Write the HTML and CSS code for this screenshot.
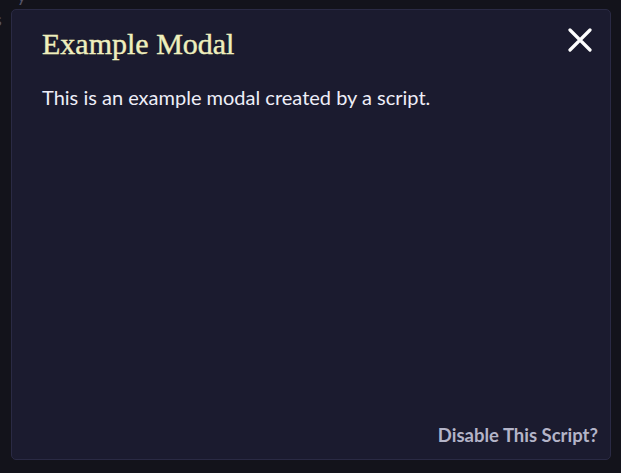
FILE: index.html
```html
<!DOCTYPE html>
<html lang="en">
<head>
<meta charset="utf-8">
<title>Example Modal</title>
<link rel="stylesheet" href="styles.css">
</head>
<body>
<div class="page">
  <p class="page-line page-line-top">y</p>
  <p class="page-line page-line-left">s</p>
</div>
<div class="modal">
  <div class="modal-header">
    <h1 class="modal-title">Example Modal</h1>
    <button class="modal-close" aria-label="Close">
      <svg width="24" height="24" viewBox="0 0 24 24"><path d="M2 2 L22 22 M22 2 L2 22" stroke="#ffffff" stroke-width="3.2" stroke-linecap="round"/></svg>
    </button>
  </div>
  <p class="modal-body">This is an example modal created by a script.</p>
  <div class="modal-footer">
    <a class="modal-disable" href="#">Disable This Script?</a>
  </div>
</div>
</body>
</html>
```
FILE: styles.css
```css
html, body {
  margin: 0;
  padding: 0;
  height: 100%;
}
body {
  background: #13131b;
  font-family: Lato, "Noto Sans", sans-serif;
  overflow: hidden;
  position: relative;
}
.page {
  color: #55556a;
  font-size: 18px;
}
.page-line {
  margin: 0;
  position: absolute;
}
.page-line-top { left: 17px; top: -16px; }
.page-line-left { left: -6px; top: 8px; }
.modal {
  position: absolute;
  left: 11px;
  top: 9px;
  width: 600px;
  height: 451px;
  box-sizing: border-box;
  background: #1b1b2f;
  border: 1px solid #2a2a44;
  border-radius: 5px;
  padding: 16px 12px 12px 30px;
  display: flex;
  flex-direction: column;
}
.modal-header {
  display: flex;
  justify-content: space-between;
  align-items: flex-start;
}
.modal-title {
  margin: 0;
  font-family: "Liberation Serif", serif;
  font-weight: normal;
  font-size: 30px;
  color: #efefbd;
  line-height: 36px;
  -webkit-text-stroke: 0.4px #efefbd;
}
.modal-close {
  background: none;
  border: 0;
  padding: 0;
  margin-top: 2px;
  margin-right: 6px;
  cursor: pointer;
  line-height: 0;
}
.modal-body {
  margin: 23px 0 0;
  font-size: 20px;
  color: #eeeef8;
  line-height: 24px;
}
.modal-footer {
  margin-top: auto;
  display: flex;
  justify-content: flex-end;
}
.modal-disable {
  font-weight: bold;
  font-size: 18.5px;
  color: #b4b4c8;
  text-decoration: none;
  line-height: 24px;
}
```
